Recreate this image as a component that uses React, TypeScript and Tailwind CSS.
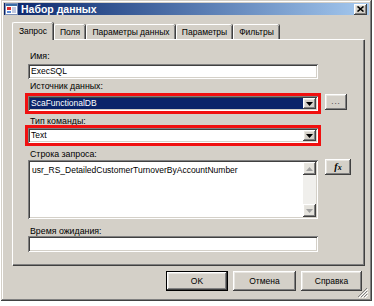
import React from 'react';

const raised = 'shadow-[inset_-1px_-1px_#404040,inset_1px_1px_#ffffff,inset_-2px_-2px_#808080,inset_2px_2px_#e8e6e1]';
const sunken = 'shadow-[inset_1px_1px_#808080,inset_-1px_-1px_#ffffff,inset_2px_2px_#404040,inset_-2px_-2px_#d4d0c8]';

const Arrow = () => (
  <svg width="7" height="4" viewBox="0 0 7 4">
    <path d="M0 0 H7 L3.5 4 Z" fill="#000" />
  </svg>
);

const DropButton = () => (
  <div className={`w-[13px] h-full bg-[#d4d0c8] flex items-center justify-center ${raised}`}>
    <Arrow />
  </div>
);

const Label = ({ children }: { children: React.ReactNode }) => (
  <div className="ml-[2px] h-[10px] leading-[10px] text-[8.8px] text-black">{children}</div>
);

const tabs = [
  { name: 'Запрос', w: 'w-[41px]', active: true },
  { name: 'Поля', w: 'w-[31px]' },
  { name: 'Параметры данных', w: 'w-[89px]' },
  { name: 'Параметры', w: 'w-[56px]' },
  { name: 'Фильтры', w: 'w-[46px]' },
];

const App = () => {
  return (
    <div className="w-[374px] h-[306px] bg-white font-['Liberation_Sans',Arial,sans-serif] select-none">
      <div className="ml-[1px] w-[371px] h-[301px] bg-[#d4d0c8] p-[3px] flex flex-col shadow-[inset_-1px_-1px_#404040,inset_1px_1px_#d4d0c8,inset_-2px_-2px_#808080,inset_2px_2px_#ffffff]">
        {/* title bar */}
        <div className="h-[16px] bg-gradient-to-r from-[#0a246a] to-[#a6caf0] flex items-center pl-[1px] pr-[2px]">
          <svg width="13" height="12" viewBox="0 0 13 12" className="mr-[3px]">
            <rect x="0.5" y="0.5" width="12" height="11" fill="#fff" stroke="#7b8fb8" />
            <rect x="1" y="1" width="11" height="2" fill="#3a6ea5" />
            <rect x="2" y="4" width="4" height="3" fill="#d83030" />
            <rect x="2" y="8" width="4" height="2" fill="#5a8ad6" />
            <rect x="7" y="4" width="4" height="6" fill="#c0c8e0" />
          </svg>
          <span className="text-white font-bold text-[10.5px] leading-none">Набор данных</span>
          <div className="flex-1" />
          <div className={`w-[13px] h-[11px] bg-[#d4d0c8] flex items-center justify-center ${raised}`}>
            <svg width="7" height="6" viewBox="0 0 7 6">
              <path d="M0.5 0.5 L6.5 5.5 M6.5 0.5 L0.5 5.5" stroke="#000" strokeWidth="1.6" />
            </svg>
          </div>
        </div>

        {/* body */}
        <div className="flex-1 flex flex-col pl-[8px] pr-[5px] pt-[7px]">
          {/* tabs */}
          <div className="flex items-end h-[17px] relative z-10">
            {tabs.map((t) => (
              <div
                key={t.name}
                className={`${t.w} ${t.active ? 'h-[18px] -mb-[1px] bg-[#d4d0c8]' : 'h-[15px]'} flex items-center justify-center text-[8.5px] text-black border-t border-l border-white rounded-t-[2px] shadow-[inset_-1px_0_#808080,1px_0_#404040] mr-[1px]`}
              >
                {t.name}
              </div>
            ))}
          </div>

          {/* panel */}
          <div className="w-[352px] h-[226px] border-t border-l border-white shadow-[inset_-1px_-1px_#808080,1px_1px_#404040] pl-[15px] pt-[11px] flex flex-col">
            <Label>Имя:</Label>
            <div className={`mt-[3px] w-[290px] h-[15px] bg-white ${sunken} flex items-center pl-[3px] text-[8.5px]`}>ExecSQL</div>

            <div className="mt-[2px]"><Label>Источник данных:</Label></div>
            <div className="mt-[5px] flex items-start">
              <div className={`w-[290px] h-[15px] bg-white ${sunken} p-[2px] flex outline-3 outline-[#f01010]`}>
                <div className="flex-1 bg-[#0a246a] text-white text-[8.5px] flex items-center pl-[1px]">ScaFunctionalDB</div>
                <DropButton />
              </div>
              <div className={`ml-[7px] -mt-[2px] w-[22px] h-[16px] ${raised} flex items-end justify-center pb-[4px]`}>
                <span className="text-[8px] leading-none tracking-[1px] text-[#202020]">...</span>
              </div>
            </div>

            <div className="mt-[5px]"><Label>Тип команды:</Label></div>
            <div className={`mt-[2px] w-[290px] h-[15px] bg-white ${sunken} p-[2px] flex outline-3 outline-[#f01010]`}>
              <div className="flex-1 text-black text-[8.5px] flex items-center pl-[1px]">Text</div>
              <DropButton />
            </div>

            <div className="mt-[6px]"><Label>Строка запроса:</Label></div>
            <div className="mt-[1px] flex items-start">
              <div className={`w-[290px] h-[59px] bg-white ${sunken} p-[2px] flex`}>
                <div className="flex-1 text-[8.5px] pl-[2px] pt-[3px] leading-[10px]">usr_RS_DetailedCustomerTurnoverByAccountNumber</div>
                <div className="w-[13px] flex flex-col bg-[#f0efec]">
                  <div className={`h-[13px] bg-[#e4e2dc] flex items-center justify-center ${raised}`}>
                    <svg width="7" height="4" viewBox="0 0 7 4"><path d="M0 4 H7 L3.5 0 Z" fill="#a0a0a0" /></svg>
                  </div>
                  <div className="flex-1 bg-[radial-gradient(#dcdad4_0.6px,transparent_0.7px)] bg-[length:2px_2px]" />
                  <div className={`h-[13px] bg-[#e4e2dc] flex items-center justify-center ${raised}`}>
                    <svg width="7" height="4" viewBox="0 0 7 4"><path d="M0 0 H7 L3.5 4 Z" fill="#a0a0a0" /></svg>
                  </div>
                </div>
              </div>
              <div className={`ml-[7px] -mt-[1px] w-[26px] h-[16px] ${raised} flex items-center justify-center`}>
                <span className="font-['Liberation_Serif',serif] italic font-bold text-[10px] leading-none">f<span className="text-[8px]">x</span></span>
              </div>
            </div>

            <div className="mt-[7px]"><Label>Время ожидания:</Label></div>
            <div className={`w-[290px] h-[16px] bg-white ${sunken}`} />
          </div>

          {/* buttons */}
          <div className="mt-[6px] flex justify-end gap-[5px] pr-[2px]">
            <div className="w-[62px] h-[20px] border border-black">
              <div className={`w-full h-full ${raised} flex items-center justify-center text-[8.5px]`}>OK</div>
            </div>
            <div className={`w-[63px] h-[20px] ${raised} flex items-center justify-center text-[8.5px]`}>Отмена</div>
            <div className={`w-[61px] h-[20px] ${raised} flex items-center justify-center text-[8.5px]`}>Справка</div>
          </div>
          <div className="flex justify-end -mt-[4px] -mr-[4px]">
            <svg width="11" height="11" viewBox="0 0 11 11">
              <path d="M10 1 L1 10 M10 4 L4 10 M10 7 L7 10" stroke="#808080" strokeWidth="1" />
              <path d="M11 2 L2 11 M11 5 L5 11 M11 8 L8 11" stroke="#ffffff" strokeWidth="1" />
            </svg>
          </div>
        </div>
      </div>
    </div>
  );
};

export default App;
